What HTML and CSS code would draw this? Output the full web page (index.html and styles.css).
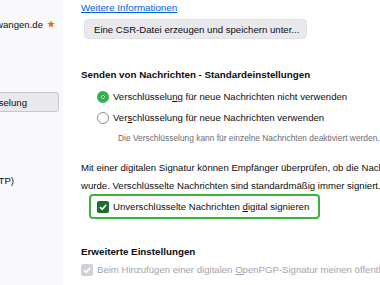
FILE: index.html
```
<!DOCTYPE html>
<html lang="de">
  <head>
    <meta charset="UTF-8" />
    <title>Konten-Einstellungen</title>
    <link rel="stylesheet" href="styles.css">
  </head>
  <body>
    <div class="window">
      <div class="sidebar">
        <div class="side-row account">
          <span>info@stadt-wangen.de</span>
          <svg class="star" width="8" height="8" viewBox="0 0 10 10">
            <path d="M5 0.5 L6.3 3.6 L9.6 3.8 L7 6 L7.9 9.4 L5 7.6 L2.1 9.4 L3 6 L0.4 3.8 L3.7 3.6 Z" fill="#e66a1d"/>
          </svg>
        </div>
        <div class="side-row selected">
          <span class="side-btn">Ende-zu-Ende-Verschlüsselung</span>
        </div>
        <div class="side-row smtp">
          <span>Postausgang-Server (SMTP)</span>
        </div>
      </div>

      <div class="main">
        <a class="link" href="#">Weitere Informationen</a>
        <button class="btn">Eine CSR-Datei erzeugen und speichern unter...</button>

        <h2>Senden von Nachrichten - Standardeinstellungen</h2>
        <div class="options">
          <label class="option">
            <span class="radio checked"></span>
            <span>Verschlüsselu<u>n</u>g für neue Nachrichten nicht verwenden</span>
          </label>
          <label class="option">
            <span class="radio"></span>
            <span>Ver<u>s</u>chlüsselung für neue Nachrichten verwenden</span>
          </label>
          <p class="hint">Die Verschlüsselung kann für einzelne Nachrichten deaktiviert werden.</p>
        </div>

        <p class="text">Mit einer digitalen Signatur können Empfänger überprüfen, ob die Nachricht von Ihnen gesendet und nicht verändert<br>wurde. Verschlüsselte Nachrichten sind standardmäßig immer signiert.</p>

        <div class="focus-box">
          <span class="check">
            <svg width="10" height="10" viewBox="0 0 10 10"><path d="M2 5.2 L4.2 7.3 L8.2 2.8" fill="none" stroke="#fff" stroke-width="1.7"/></svg>
          </span>
          <span>Unverschlüsselte Nachrichten <u>d</u>igital signieren</span>
        </div>

        <h2 class="second">Erweiterte Einstellungen</h2>
        <label class="option disabled">
          <span class="check off">
            <svg width="10" height="10" viewBox="0 0 10 10"><path d="M2 5.2 L4.2 7.3 L8.2 2.8" fill="none" stroke="#fff" stroke-width="1.7"/></svg>
          </span>
          <span>Beim Hinzufügen einer digitalen <u>O</u>penPGP-Signatur meinen öffentlichen Schlüssel anhängen</span>
        </label>
      </div>
    </div>
  </body>
</html>
```

FILE: styles.css
```
body {
  margin: 0;
  font-family: "Liberation Sans", Arial, sans-serif;
  font-size: 9.6px;
  color: #0c0c0f;
  background-color: white;
  overflow: hidden;
}

.window {
  display: flex;
  height: 285px;
  width: 380px;
  overflow: hidden;
}

.sidebar {
  width: 63px;
  flex-shrink: 0;
  background-color: #f9f9fb;
  overflow: hidden;
  padding-top: 15px;
}

.side-row {
  display: flex;
  justify-content: flex-end;
  align-items: center;
  white-space: nowrap;
  height: 18px;
}

.account {
  padding-right: 8px;
  gap: 4px;
}

.star {
  flex-shrink: 0;
}

.selected {
  margin-top: 59px;
  height: 20px;
}

.side-btn {
  display: flex;
  align-items: center;
  height: 18px;
  background-color: #e9e9ed;
  border: 1px solid #c6c6cc;
  border-radius: 3px;
  padding: 0 31px 0 6px;
  margin-right: 4px;
}

.smtp {
  margin-top: 59px;
  padding-right: 49px;
}

.main {
  flex: 1;
  padding-left: 18px;
  white-space: nowrap;
  min-width: 0;
}

.link {
  display: block;
  width: fit-content;
  color: #0061e0;
  font-size: 9.8px;
  margin-top: 1px;
  line-height: 14px;
}

.btn {
  display: block;
  font-family: inherit;
  font-size: 9.6px;
  color: #0c0c0f;
  background-color: #e9e9ed;
  border: 1px solid #e0e0e6;
  border-radius: 4px;
  height: 20px;
  padding: 0 7px 0 9px;
  margin: 4px 0 0 3px;
}

h2 {
  font-size: 9.8px;
  font-weight: 700;
  margin: 27px 0 0 0;
  line-height: 18px;
}

.options {
  padding-left: 16px;
  margin-top: 2px;
}

.option {
  display: flex;
  align-items: center;
  gap: 4px;
  height: 21px;
}

.radio {
  width: 10px;
  height: 10px;
  border: 1px solid #8f8f9d;
  border-radius: 50%;
  box-sizing: content-box;
  flex-shrink: 0;
}

.radio.checked {
  width: 4px;
  height: 4px;
  border: 4px solid #2fb34f;
  background-color: #1f6b2e;
  box-shadow: inset 0 0 0 1px white;
}

.hint {
  margin: 0;
  padding-left: 21px;
  font-size: 8.4px;
  color: #6b6b73;
  line-height: 20px;
}

.text {
  margin: 11px 0 0 0;
  line-height: 18px;
}

.focus-box {
  display: inline-flex;
  align-items: center;
  gap: 4px;
  border: 2px solid #3cb43c;
  border-radius: 4px;
  height: 21px;
  padding: 0 9px 0 6px;
  margin: -1px 0 0 8px;
}

.check {
  width: 12px;
  height: 12px;
  background-color: #1b6e30;
  border-radius: 2px;
  display: flex;
  align-items: center;
  justify-content: center;
  flex-shrink: 0;
}

.check.off {
  background-color: #cfcfd6;
}

.second {
  margin-top: 24px;
}

.disabled {
  color: #a3a3ab;
  height: 17px;
}
```
